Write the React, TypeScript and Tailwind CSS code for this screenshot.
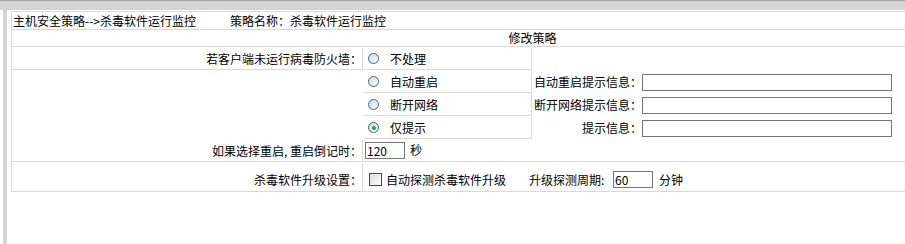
const cellLine = 'border-[#d9d9d9]';

function Radio({ checked }: { checked?: boolean }) {
  return (
    <span className="flex size-[11px] shrink-0 items-center justify-center rounded-full border border-[#33659b] bg-linear-to-br from-[#d6d6cf] to-white">
      {checked && <span className="size-[4px] rounded-full bg-[#23a823]" />}
    </span>
  );
}

function Checkbox() {
  return (
    <span className="size-[13px] shrink-0 border border-[#1c5180] bg-linear-to-br from-[#dcdcd7] to-white" />
  );
}

function TextBox({ value, width }: { value?: string; width: string }) {
  return (
    <input
      type="text"
      defaultValue={value}
      className={`${width} h-[17px] shrink-0 border border-[#767676] bg-white px-px text-[12px] leading-none text-black outline-none`}
    />
  );
}

const options = [
  { label: '不处理', hint: '', checked: false },
  { label: '自动重启', hint: '自动重启提示信息：', checked: false },
  { label: '断开网络', hint: '断开网络提示信息：', checked: false },
  { label: '仅提示', hint: '提示信息：', checked: true },
];

export default function App() {
  return (
    <div className="h-[244px] w-[905px] overflow-hidden bg-white text-[12px] leading-none text-black font-['Noto_Sans_CJK_SC','Noto_Sans',sans-serif]">
      <div className="h-px bg-[#a3a3a3]" />
      <div className="h-[9px] bg-[#d4d4d4]" />
      <div className="flex">
        <div className="ml-[3px] h-[234px] w-[4px] shrink-0 bg-[#d4d4d4]" />
        <div className="ml-[4px] pt-px">
          <div className={`w-[1042px] border-l border-t ${cellLine}`}>
            {/* title */}
            <div className={`flex h-[18px] items-center border-b pl-px ${cellLine}`}>
              <span className="w-[217px] whitespace-nowrap">主机安全策略--&gt;杀毒软件运行监控</span>
              <span className="whitespace-nowrap">策略名称：杀毒软件运行监控</span>
            </div>
            <div className={`flex h-[17px] items-center justify-center border-b ${cellLine}`}>
              修改策略
            </div>

            {/* action options */}
            {options.map((opt, i) => (
              <div key={opt.label} className="flex h-[23px]">
                {i === 0 ? (
                  <div className={`mt-px flex h-[22px] w-[351px] items-center justify-end border-r border-b ${cellLine}`}>
                    若客户端未运行病毒防火墙：
                  </div>
                ) : (
                  <div className="w-[351px]" />
                )}
                <div className="w-px" />
                <div className={`mt-px flex h-[22px] w-[168px] items-center border-r border-b pl-[4px] ${cellLine}`}>
                  <Radio checked={opt.checked} />
                  <span className="ml-[11px]">{opt.label}</span>
                </div>
                <div className="mt-px flex h-[22px] items-center">
                  {opt.hint && (
                    <>
                      <span className="w-[110px] text-right whitespace-nowrap">{opt.hint}</span>
                      <TextBox width="w-[250px]" />
                    </>
                  )}
                </div>
              </div>
            ))}

            {/* reboot countdown */}
            <div className={`flex h-[23px] border-b ${cellLine}`}>
              <div className={`mt-px flex h-[21px] w-[351px] items-center justify-end border-r ${cellLine}`}>
                如果选择重启, 重启倒记时：
              </div>
              <div className="w-px" />
              <div className="flex items-center pl-px">
                <TextBox value="120" width="w-[40px]" />
                <span className="ml-[5px]">秒</span>
              </div>
            </div>

            {/* upgrade */}
            <div className={`flex h-[30px] border-b ${cellLine}`}>
              <div className={`mt-[2px] flex h-[27px] w-[351px] items-center justify-end border-r pt-[4px] ${cellLine}`}>
                杀毒软件升级设置：
              </div>
              <div className="w-px" />
              <div className="mt-[2px] flex h-[27px] items-center pt-[4px] pl-[5px]">
                <Checkbox />
                <span className="ml-[4px] w-[120px] whitespace-nowrap">自动探测杀毒软件升级</span>
                <span className="ml-[23px] w-[84px] whitespace-nowrap">升级探测周期:</span>
                <TextBox value="60" width="w-[40px]" />
                <span className="ml-[6px]">分钟</span>
              </div>
            </div>
          </div>
        </div>
      </div>
    </div>
  );
}
